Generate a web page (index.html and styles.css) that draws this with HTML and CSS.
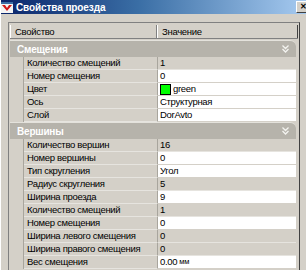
FILE: index.html
```html
<!DOCTYPE html>
<html lang="ru">
<head>
<meta charset="utf-8">
<link rel="stylesheet" href="styles.css">
</head>
<body>
<div class="window">
  <div class="titlebar">
    <svg class="appicon" width="12" height="11" viewBox="0 0 12 11">
      <rect x="0" y="0" width="12" height="11" fill="#f4f4f4"/>
      <rect x="0" y="0" width="12" height="2" fill="#3a6ea5"/>
      <path d="M1 3 L6 9 L11 3 L8 3 L6 6 L4 3 Z" fill="#d01818"/>
    </svg>
    <span class="title">Свойства проезда</span>
    <span class="close">✕</span>
  </div>
  <div class="client">
    <div class="panel">
      <div class="head">
        <div class="hcell hname">Свойство</div>
        <div class="hcell hval">Значение</div>
      </div>
      <div class="cat first"><span>Смещения</span>
        <svg class="chev" width="7" height="8" viewBox="0 0 7 8"><path d="M0.5 0.5 L3.5 3.5 L6.5 0.5 M0.5 4 L3.5 7 L6.5 4" fill="none" stroke="#f4f4f0" stroke-width="1.3"/></svg>
      </div>
      <div class="row"><div class="ind"></div><div class="name">Количество смещений</div><div class="val ro">1</div></div>
      <div class="row"><div class="ind"></div><div class="name">Номер смещения</div><div class="val">0</div></div>
      <div class="row"><div class="ind"></div><div class="name">Цвет</div><div class="val"><span class="swatch"></span>green</div></div>
      <div class="row"><div class="ind"></div><div class="name">Ось</div><div class="val">Структурная</div></div>
      <div class="row"><div class="ind"></div><div class="name">Слой</div><div class="val">DorAvto</div></div>
      <div class="cat"><span>Вершины</span>
        <svg class="chev" width="7" height="8" viewBox="0 0 7 8"><path d="M0.5 0.5 L3.5 3.5 L6.5 0.5 M0.5 4 L3.5 7 L6.5 4" fill="none" stroke="#f4f4f0" stroke-width="1.3"/></svg>
      </div>
      <div class="row"><div class="ind"></div><div class="name">Количество вершин</div><div class="val ro">16</div></div>
      <div class="row"><div class="ind"></div><div class="name">Номер вершины</div><div class="val">0</div></div>
      <div class="row"><div class="ind"></div><div class="name">Тип скругления</div><div class="val">Угол</div></div>
      <div class="row"><div class="ind"></div><div class="name">Радиус скругления</div><div class="val ro">5</div></div>
      <div class="row"><div class="ind"></div><div class="name">Ширина проезда</div><div class="val">9</div></div>
      <div class="row"><div class="ind"></div><div class="name">Количество смещений</div><div class="val ro">1</div></div>
      <div class="row"><div class="ind"></div><div class="name">Номер смещения</div><div class="val">0</div></div>
      <div class="row"><div class="ind"></div><div class="name">Ширина левого смещения</div><div class="val ro">0</div></div>
      <div class="row"><div class="ind"></div><div class="name">Ширина правого смещения</div><div class="val ro">0</div></div>
      <div class="row"><div class="ind"></div><div class="name">Вес смещения</div><div class="val">0.00 <span class="unit">мм</span></div></div>
    </div>
  </div>
</div>
</body>
</html>
```
FILE: styles.css
```css
html, body {
  margin: 0;
  padding: 0;
  background: #d4d0c8;
  overflow: hidden;
}
.window {
  width: 306px;
  height: 270px;
  font-family: "Liberation Sans", Arial, sans-serif;
  font-size: 9.5px;
  letter-spacing: -0.3px;
  color: #000;
  background: #d4d0c8;
  border-left: 1px solid #ffffff;
  box-sizing: border-box;
}
.titlebar {
  height: 14px;
  display: flex;
  align-items: center;
  letter-spacing: 0;
  background: linear-gradient(to right, #0a246a 0%, #3a6ea5 45%, #a6caf0 100%);
}
.appicon { margin-right: 3px; }
.title {
  color: #fff;
  font-weight: bold;
  font-size: 10px;
  letter-spacing: -0.1px;
}
.close {
  margin-left: auto;
  width: 12px;
  height: 10px;
  background: #d4d0c8;
  border: 1px solid;
  border-color: #fff #404040 #404040 #fff;
  font-size: 8px;
  line-height: 10px;
  text-align: center;
  font-weight: bold;
  color: #000;
  margin-right: -4px;
}
.client {
  padding: 8px 6px 0 7px;
}
.panel {
  border: 1px solid;
  border-color: #808080 #404040 #fff #808080;
  padding: 2px 0 0 1px;
  height: 260px;
  box-sizing: border-box;
}
.head {
  display: flex;
  height: 13px;
  border-bottom: 1px solid #808080;
  margin-right: 1px;
}
.hcell {
  line-height: 13px;
  padding-left: 5px;
  box-sizing: border-box;
  border-right: 1px solid #808080;
  box-shadow: inset 1px 0 0 #fff;
}
.hname { width: 147px; }
.hval { flex: 1; border-right: 1px solid #404040; }
.cat {
  display: flex;
  align-items: center;
  height: 17px;
  background: #b6b3ab;
  border-top: 1px solid #e4e2dc;
  border-top-right-radius: 6px;
  box-sizing: border-box;
  color: #fff;
  font-weight: bold;
  font-size: 10px;
  letter-spacing: -0.2px;
  padding-left: 7px;
  margin-right: 3px;
}
.cat.first { margin-top: 1px; }
.chev { margin-left: auto; margin-right: 7px; }
.row {
  display: flex;
  height: 13px;
  margin-right: 3px;
}
.ind {
  width: 13px;
  border-right: 1px solid #a8a59d;
}
.name {
  width: 134px;
  line-height: 12px;
  padding-left: 3px;
  border-bottom: 1px solid #e6e4df;
  border-right: 1px solid #a8a59d;
  box-sizing: border-box;
  white-space: nowrap;
  overflow: hidden;
}
.val {
  flex: 1;
  background: #fff;
  line-height: 12px;
  padding-left: 2px;
  border-bottom: 1px solid #d4d0c8;
  box-sizing: border-box;
  display: flex;
  align-items: center;
}
.val.ro { background: #d4d0c8; border-bottom-color: #e6e4df; }
.swatch {
  width: 9px;
  height: 9px;
  background: #00ff00;
  border: 1px solid #000;
  margin-right: 2px;
}
.unit { font-size: 7.5px; margin-left: 2px; }
```
